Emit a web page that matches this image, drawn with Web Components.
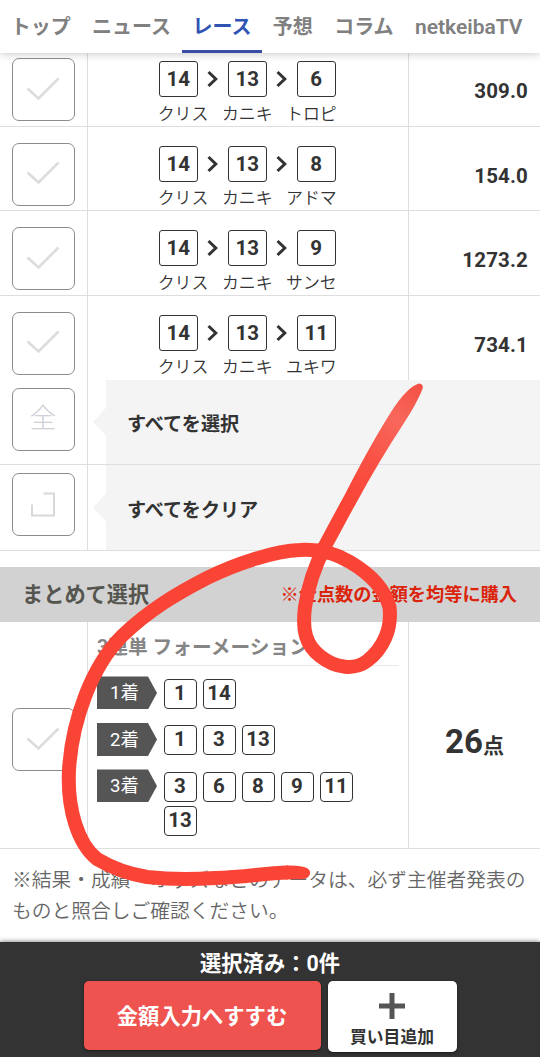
<!DOCTYPE html>
<html lang="ja">
<head>
<meta charset="utf-8">
<title>netkeiba</title>
<style>
	html, body {
		margin: 0;
		padding: 0;
	}
	body {
		position: relative;
		width: 540px;
		height: 1057px;
		overflow: hidden;
		background: #fff;
		color: #333;
		font-family: Roboto, "Noto Sans CJK JP", sans-serif;
	}
</style>
</head>
<body>
<bet-page></bet-page>

<script>
const define = (name, html) => {
	const template = document.createElement('template');
	template.innerHTML = html;
	customElements.define(name, class extends HTMLElement {
		constructor() {
			super();
			this.attachShadow({ mode: 'open' });
			this.shadowRoot.appendChild(template.content.cloneNode(true));
		}
	});
};

define('nav-tab', `
	<style>
		:host {
			display: block;
			box-sizing: border-box;
			height: 53px;
			padding: 0 10.7px;
			font-size: 20px;
			font-weight: 700;
			line-height: 55px;
			white-space: nowrap;
			color: #808080;
		}
		:host([active]) {
			color: #2f54b4;
			border-bottom: 3px solid #3a4da6;
		}
		:host([latin]) {
			font-weight: 600;
			font-size: 21px;
		}
	</style>
	<slot></slot>
`);

define('top-nav', `
	<style>
		:host {
			display: flex;
			position: relative;
			z-index: 2;
			height: 53px;
			background: #fff;
			box-shadow: 0 1px 8px rgba(0, 0, 0, .22);
		}
	</style>
	<slot></slot>
`);

define('check-box', `
	<style>
		:host {
			display: grid;
			place-items: center;
			box-sizing: border-box;
			width: 63px;
			height: 63px;
			border: 1.5px solid #8c8c8c;
			border-radius: 7px;
			background: #fff;
			color: #d0d0d6;
			font-size: 27px;
			font-weight: 300;
			line-height: 1;
		}
		svg {
			display: block;
			margin-top: -2px;
		}
	</style>
	<slot>
		<svg width="34" height="24" viewBox="0 0 34 24" fill="none" stroke="#dcdcdc" stroke-width="2.6">
			<path d="M1.5 11.5 L12.5 21.5 L32.5 1.5"/>
		</svg>
	</slot>
`);

define('num-chip', `
	<style>
		:host {
			display: block;
			box-sizing: border-box;
			width: 39px;
			height: 36px;
			border: 1.5px solid #333;
			border-radius: 3px;
			background: #fff;
			text-align: center;
			font-size: 20.5px;
			font-weight: 700;
			line-height: 34px;
		}
		:host([small]) {
			width: 33px;
			height: 30px;
			border-radius: 4px;
			line-height: 27px;
		}
	</style>
	<slot></slot>
`);

define('cell-row', `
	<style>
		:host {
			display: grid;
			grid-template-columns: 88px 321px 131px;
			box-sizing: border-box;
			height: 84.5px;
			border-bottom: 1px solid #dedede;
		}
		:host([last]) {
			height: 84px;
			border-bottom: none;
		}
		:host([tall]) {
			height: 227px;
		}
		.pick {
			display: flex;
			align-items: flex-start;
			padding: 16px 0 0 11.5px;
			border-right: 1px solid #dedede;
		}
		:host([tall]) .pick {
			align-items: center;
			padding-top: 9px;
		}
		.body {
			border-right: 1px solid #dedede;
		}
	</style>
	<div class="pick"><check-box></check-box></div>
	<div class="body"><slot></slot></div>
	<slot name="end"></slot>
`);

class OddsRow extends HTMLElement {
	constructor() {
		super();
		this.attachShadow({ mode: 'open' });
		const horses = this.getAttribute('horses').split(',').map(h => h.split(':'));
		const arrow = `
			<svg width="12" height="18" viewBox="0 0 12 18" fill="none" stroke="#333" stroke-width="3">
				<path d="M1.500 2 L8.8 9 L1.500 16"/>
			</svg>`;
		this.shadowRoot.innerHTML = `
			<style>
				:host {
					display: block;
				}
				.nums, .names {
					display: flex;
					justify-content: center;
					padding-right: 1.5px;
				}
				.nums {
					align-items: center;
					gap: 9px;
					padding-top: 19px;
				}
				.names {
					gap: 13.5px;
					margin-top: 4.5px;
					font-size: 16.9px;
					font-weight: 350;
					line-height: 24px;
				}
				.odds {
					align-self: center;
					padding: 15px 12px 0 0;
					text-align: right;
					font-size: 20.5px;
					font-weight: 700;
					letter-spacing: .15px;
				}
			</style>
			<cell-row ${this.hasAttribute('last') ? 'last' : ''}>
				<div class="nums">${horses.map(h => `<num-chip>${h[0]}</num-chip>`).join(arrow)}</div>
				<div class="names">${horses.map(h => `<span>${h[1]}</span>`).join('')}</div>
				<div class="odds" slot="end">${this.getAttribute('odds')}</div>
			</cell-row>
		`;
	}
}
customElements.define('odds-row', OddsRow);

define('bulk-row', `
	<style>
		:host {
			display: grid;
			grid-template-columns: 88px 18px 1fr;
			grid-template-rows: 100%;
			box-sizing: border-box;
			height: 85.7px;
			border-bottom: 1px solid #dedede;
		}
		.pick {
			padding: 8px 0 0 11.5px;
			border-right: 1px solid #dedede;
		}
		.tip {
			align-self: center;
			justify-self: end;
			width: 13px;
			height: 28px;
			background: #f4f4f4;
			clip-path: polygon(0 50%, 100% 0, 100% 100%);
		}
		.label {
			display: flex;
			align-items: center;
			padding: 6px 0 0 21px;
			background: #f4f4f4;
			font-size: 19.1px;
			font-weight: 700;
			line-height: 28px;
		}
	</style>
	<div class="pick"><check-box><slot name="icon"></slot></check-box></div>
	<div class="tip"></div>
	<div class="label"><slot></slot></div>
`);

define('section-head', `
	<style>
		:host {
			display: flex;
			justify-content: space-between;
			height: 55px;
			margin-top: 16.500px;
			padding: 0 23px 0 22px;
			background: #d2d2d2;
			line-height: 55px;
			font-size: 21.2px;
			font-weight: 700;
			color: #55554f;
		}
		.note {
			font-size: 18.2px;
			font-weight: 700;
			color: #dc230b;
		}
	</style>
	<slot></slot>
	<span class="note"><slot name="note"></slot></span>
`);

class PlaceLine extends HTMLElement {
	constructor() {
		super();
		this.attachShadow({ mode: 'open' });
		this.shadowRoot.innerHTML = `
			<style>
				:host {
					display: flex;
					align-items: flex-start;
					gap: 6.5px;
				}
				.tag {
					box-sizing: border-box;
					width: 60px;
					height: 33px;
					padding-left: 13px;
					background: #555;
					clip-path: polygon(0 0, 51px 0, 100% 50%, 51px 100%, 0 100%);
					color: #fff;
					font-size: 18.5px;
					line-height: 34px;
				}
				.chips {
					display: flex;
					flex-wrap: wrap;
					gap: 4.5px 6px;
					width: 200px;
					padding-top: 2.5px;
				}
			</style>
			<div class="tag"><slot></slot></div>
			<div class="chips">${this.getAttribute('nums').split(' ').map(n => `<num-chip small>${n}</num-chip>`).join('')}</div>
		`;
	}
}
customElements.define('place-line', PlaceLine);

define('formation-row', `
	<style>
		:host {
			display: block;
		}
		.title {
			margin: 9px 9px 0;
			height: 34px;
			border-bottom: 1px solid #e8e8e8;
			font-size: 19.7px;
			font-weight: 700;
			line-height: 33px;
			color: #858585;
		}
		.lines {
			display: flex;
			flex-direction: column;
			gap: 13.5px;
			padding: 10px 0 0 9px;
		}
		.points {
			align-self: center;
			padding-top: 11.5px;
			text-align: center;
			font-size: 33px;
			font-weight: 700;
		}
		.points small {
			font-size: 21px;
		}
	</style>
	<cell-row tall>
		<div class="title">3連単 フォーメーション</div>
		<div class="lines">
			<place-line nums="1 14">1着</place-line>
			<place-line nums="1 3 13">2着</place-line>
			<place-line nums="3 6 8 9 11 13">3着</place-line>
		</div>
		<div class="points" slot="end">26<small>点</small></div>
	</cell-row>
`);

define('page-note', `
	<style>
		:host {
			display: block;
			padding: 15.5px 0 0 12px;
			font-size: 19.75px;
			font-weight: 350;
			line-height: 31.5px;
			white-space: nowrap;
			color: #666;
		}
	</style>
	<slot></slot>
`);

define('buy-bar', `
	<style>
		:host {
			position: absolute;
			left: 0;
			right: 0;
			bottom: 0;
			z-index: 5;
			box-sizing: border-box;
			height: 115px;
			background: #333;
			box-shadow: 0 0 5px rgba(0, 0, 0, .6);
			color: #fff;
			font-weight: 700;
			text-align: center;
		}
		.count {
			height: 39px;
			font-size: 21.3px;
			line-height: 44px;
		}
		.buttons {
			display: flex;
			justify-content: center;
			gap: 7px;
		}
		.go, .add {
			box-sizing: border-box;
			border-radius: 5px;
			box-shadow: 0 1px 3px rgba(0, 0, 0, .5);
		}
		.go {
			width: 237px;
			height: 69px;
			background: #ee5350;
			font-size: 21.3px;
			line-height: 72px;
		}
		.add {
			display: flex;
			flex-direction: column;
			align-items: center;
			width: 129px;
			height: 71px;
			padding-top: 12px;
			background: #fff;
			color: #333;
			font-size: 16.8px;
			line-height: 24px;
		}
		.add svg {
			margin-bottom: 6px;
		}
	</style>
	<div class="count">選択済み：0件</div>
	<div class="buttons">
		<div class="go">金額入力へすすむ</div>
		<div class="add">
			<svg width="26" height="26" viewBox="0 0 26 26" stroke="#555" stroke-width="5">
				<path d="M13 0 V26 M0 13 H26"/>
			</svg>
			買い目追加
		</div>
	</div>
`);

// Freehand marker over the list
define('marker-ink', `
	<style>
		:host {
			position: absolute;
			top: 0;
			left: 0;
			z-index: 4;
			pointer-events: none;
		}
		svg {
			display: block;
		}
	</style>
	<svg width="540" height="1057" viewBox="0 0 540 1057" fill="none">
		<defs>
			<linearGradient id="fade" gradientUnits="userSpaceOnUse" x1="420" y1="385" x2="345" y2="505">
				<stop offset="0" stop-color="#f44336" stop-opacity=".92"/>
				<stop offset=".3" stop-color="#f94436" stop-opacity=".8"/>
				<stop offset=".65" stop-color="#f94436" stop-opacity=".93"/>
				<stop offset="1" stop-color="#f94436"/>
			</linearGradient>
		</defs>
		<path fill="url(#fade)" d="M419 383.5 Q424 384 422.5 389 Q417 403 404 423 Q379 461 355.4 504.4 L343.2 497.7 Q369 447 391 412 Q407 387 419 383.5 Z"/>
		<path stroke="#f94436" stroke-width="14" stroke-linejoin="round"
			d="M349.5 500.7 C341 516 332 533 325 546 C317 562 308 586 305 607 C302 631 306 645 320 656 C336 669 355 670 367 661 C384 648 392 628 389.500 607 C385 590 372 575 350 562 C333 552 316 549 300 550 C274 551 235 564 207 578 C176 594 149 610 122 636 C92 666 72 720 69 770 C67 809 78 844 97 859 C112 868 129 874 147 877 C174 880 199 879 215 878 C246 877 265 873 288 872.500"/>
		<path fill="#f94436" d="M286 865.5 Q301 865 307 868 Q312 871 309 876 Q306 880 298 879 L286 879.600 Z"/>
	</svg>
`);

define('bet-page', `
	<style>
		:host {
			display: block;
		}
		main {
			margin-top: -11px;
		}
	</style>
	<top-nav>
		<nav-tab>トップ</nav-tab>
		<nav-tab>ニュース</nav-tab>
		<nav-tab active>レース</nav-tab>
		<nav-tab>予想</nav-tab>
		<nav-tab>コラム</nav-tab>
		<nav-tab latin>netkeibaTV</nav-tab>
	</top-nav>
	<main>
		<odds-row horses="14:クリス,13:カニキ,6:トロピ" odds="309.0"></odds-row>
		<odds-row horses="14:クリス,13:カニキ,8:アドマ" odds="154.0"></odds-row>
		<odds-row horses="14:クリス,13:カニキ,9:サンセ" odds="1273.2"></odds-row>
		<odds-row horses="14:クリス,13:カニキ,11:ユキワ" odds="734.1" last></odds-row>
		<bulk-row><span slot="icon">全</span>すべてを選択</bulk-row>
		<bulk-row>
			<svg slot="icon" width="24" height="25" viewBox="0 0 24 25" fill="none" stroke="#d8d8d8" stroke-width="2">
				<path d="M12.500 1.500 H23 V23.500 H1 V12.500"/>
			</svg>
			すべてをクリア
		</bulk-row>
		<section-head>まとめて選択<span slot="note">※全点数の金額を均等に購入</span></section-head>
		<formation-row></formation-row>
		<page-note>※結果・成績・オッズなどのデータは、必ず主催者発表の<br>ものと照合しご確認ください。</page-note>
	</main>
	<marker-ink></marker-ink>
	<buy-bar></buy-bar>
`);
</script>
</body>
</html>
